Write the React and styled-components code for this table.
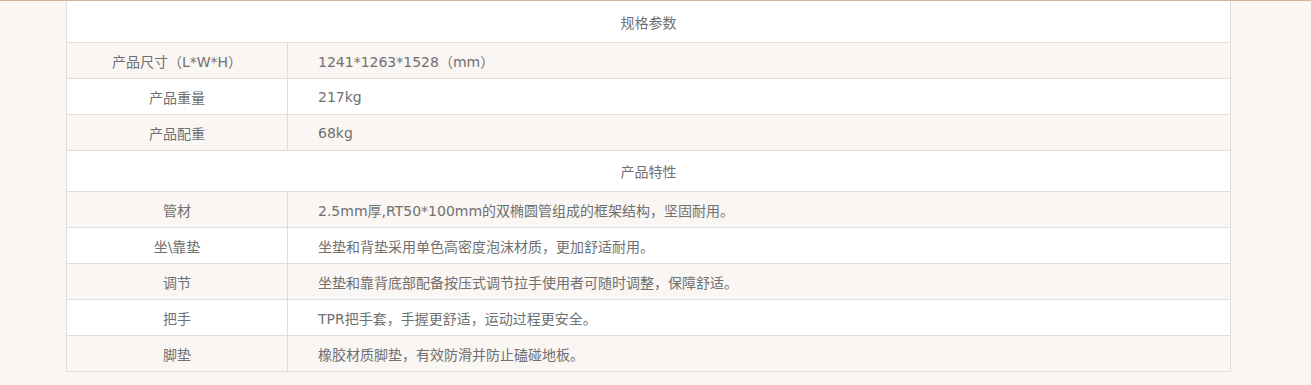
import React from 'react'
import styled, {createGlobalStyle} from 'styled-components'

const specs = [
  {label: '产品尺寸（L*W*H）', value: '1241*1263*1528（mm）'},
  {label: '产品重量', value: '217kg'},
  {label: '产品配重', value: '68kg'},
]

const features = [
  {label: '管材', value: '2.5mm厚,RT50*100mm的双椭圆管组成的框架结构，坚固耐用。'},
  {label: '坐\\靠垫', value: '坐垫和背垫采用单色高密度泡沫材质，更加舒适耐用。'},
  {label: '调节', value: '坐垫和靠背底部配备按压式调节拉手使用者可随时调整，保障舒适。'},
  {label: '把手', value: 'TPR把手套，手握更舒适，运动过程更安全。'},
  {label: '脚垫', value: '橡胶材质脚垫，有效防滑并防止磕碰地板。'},
]

function Section({title, rows}) {
  return (
    <>
      <HeadRow>{title}</HeadRow>
      {rows.map((row, index) => (
        <Row key={row.label} $striped={index % 2 === 0}>
          <Label>{row.label}</Label>
          <Value>{row.value}</Value>
        </Row>
      ))}
    </>
  )
}

export default function App() {
  return (
    <Page>
      <GlobalStyle />
      <Table>
        <Section title="规格参数" rows={specs} />
        <Section title="产品特性" rows={features} />
      </Table>
    </Page>
  )
}

const GlobalStyle = createGlobalStyle`
  body {
    margin: 0;
    background: #f9f6f4;
    font-family: "DejaVu Sans", "Noto Sans CJK SC", sans-serif;
  }
`

const Page = styled.div`
  border-top: 1px solid #d6b391;
  min-height: 384px;
  padding-left: 66px;
`

const Table = styled.div`
  width: 1165px;
  box-sizing: border-box;
  border: 1px solid #e1dddb;
  border-top: 1px solid #fff;
  font-size: 14px;
  color: #707070;
`

const HeadRow = styled.div`
  height: 40px;
  display: flex;
  align-items: center;
  justify-content: center;
  background: #fff;
  border-bottom: 1px solid #e1dddb;
`

const Row = styled.div`
  display: grid;
  grid-template-columns: 221px 1fr;
  height: 35px;
  background: ${(props) => (props.$striped ? '#f9f6f4' : '#fff')};
  border-bottom: 1px solid #e1dddb;
  &:last-child {
    border-bottom: none;
  }
`

const Label = styled.div`
  display: flex;
  align-items: center;
  justify-content: center;
  border-right: 1px solid #e1dddb;
`

const Value = styled.div`
  display: flex;
  align-items: center;
  padding-left: 30px;
`
